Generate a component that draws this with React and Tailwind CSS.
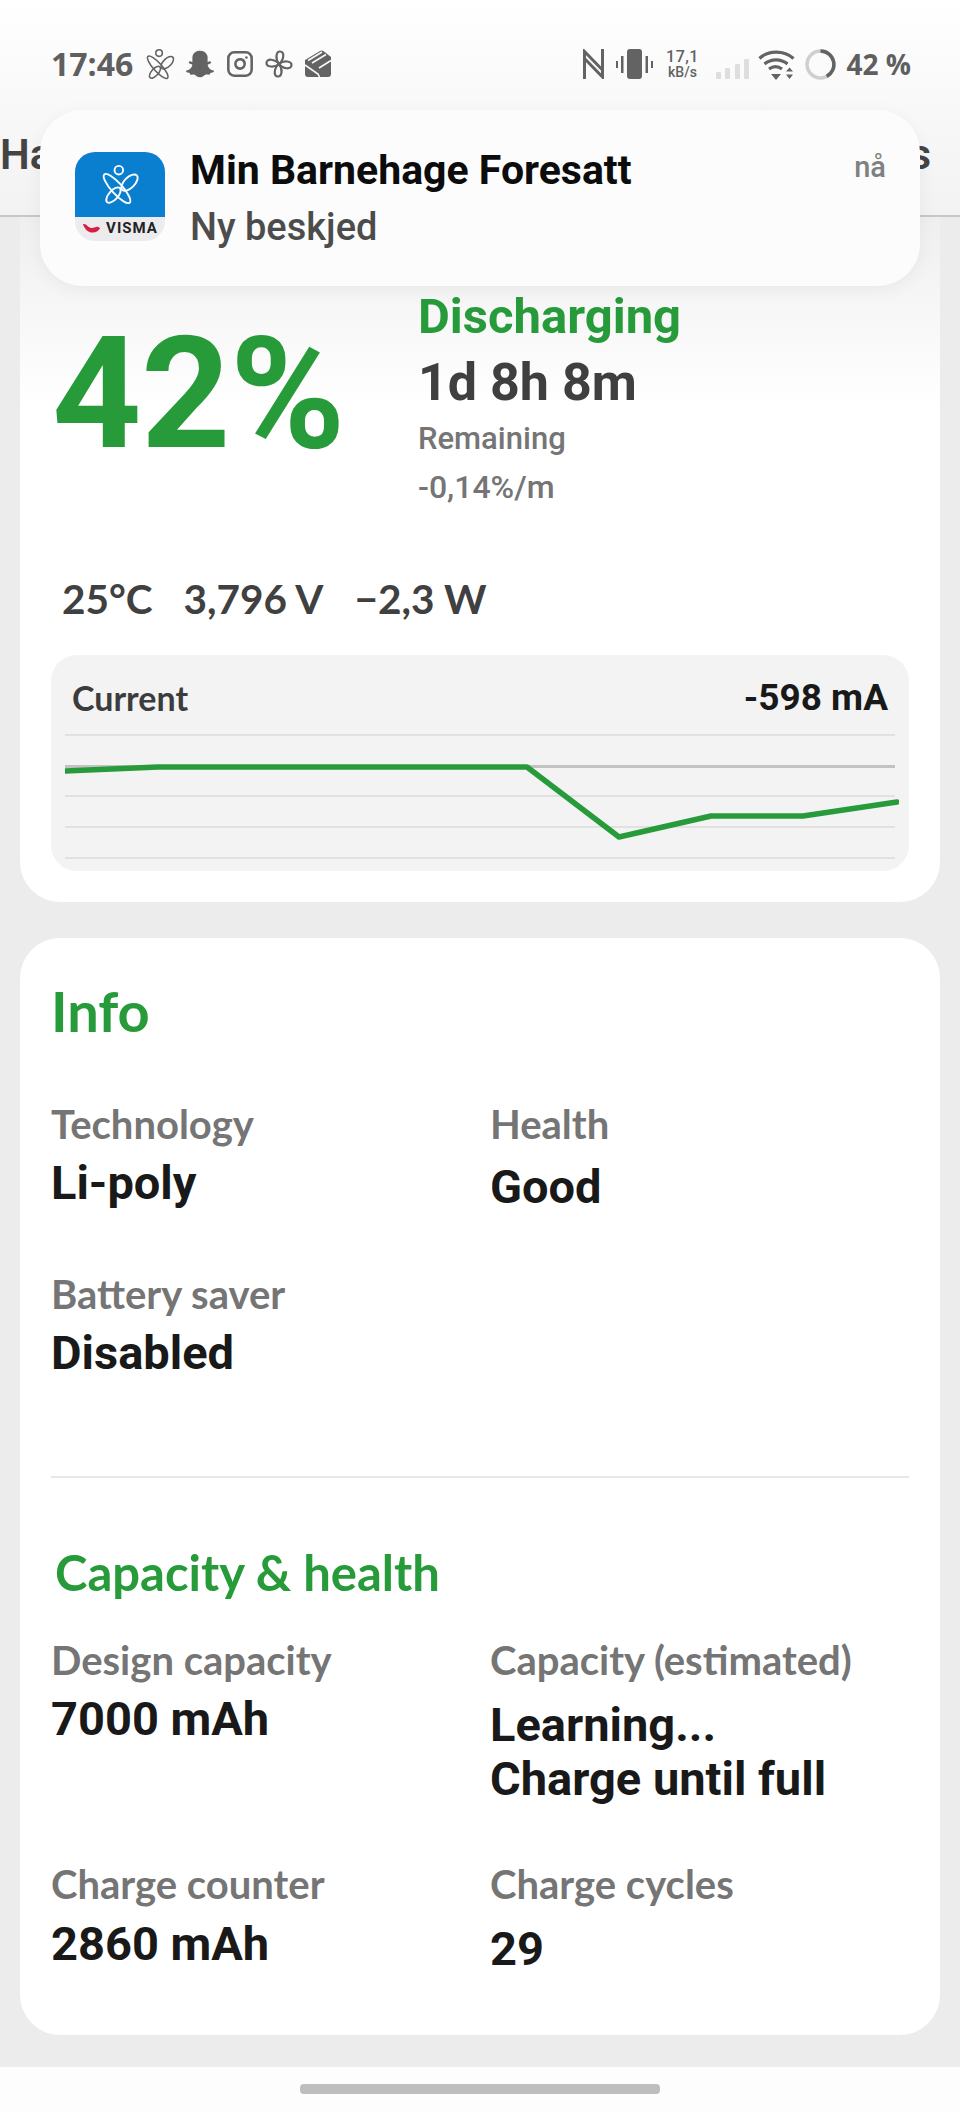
import { Instagram } from "lucide-react";
import { FaSnapchatGhost } from "react-icons/fa";

const roboto = "font-['Roboto',sans-serif]";
const lato = "font-['Lato',sans-serif]";

function PersonMark({ className, color, strokeWidth = 1.7 }) {
  return (
    <svg viewBox="0 0 32 34" className={className} fill="none" stroke={color} strokeWidth={strokeWidth}>
      <circle cx="15" cy="4.5" r="3.6" />
      <ellipse cx="13.5" cy="20" rx="4.6" ry="16" transform="rotate(-42 13.5 20)" />
      <ellipse cx="24" cy="15" rx="4.4" ry="8.6" transform="rotate(45 24 15)" />
      <ellipse cx="10.5" cy="25.5" rx="3.8" ry="8" transform="rotate(42 10.5 25.5)" />
    </svg>
  );
}

function Pinwheel({ className }) {
  return (
    <svg viewBox="0 0 28 28" className={className} fill="none" stroke="#636363" strokeWidth="2.2" strokeLinejoin="round">
      <path d="M14 14 C10 9 11 1.5 15 1.5 C20 1.5 19 10 14 14 Z" />
      <path d="M14 14 C19 10 26.5 11 26.5 15 C26.5 20 18 19 14 14 Z" />
      <path d="M14 14 C18 19 17 26.5 13 26.5 C8 26.5 9 18 14 14 Z" />
      <path d="M14 14 C9 18 1.5 17 1.5 13 C1.5 8 10 9 14 14 Z" />
    </svg>
  );
}

function StackIcon({ className }) {
  return (
    <svg viewBox="0 0 28 28" className={className}>
      <path d="M1 10 L16 1 Q18 0 20 1.5 L27 7 V24 Q27 27 24 27 H4 Q1 27 1 24 Z" fill="#636363" />
      <path d="M4 10.5 L18 2 M8 13 L22 4.5 M1 15 L14 24 L15.5 27 M15 18 L27 10.5" fill="none" stroke="#f8f8f8" strokeWidth="1.6" />
    </svg>
  );
}

function NfcIcon({ className }) {
  return (
    <svg viewBox="0 0 21 30" className={className} fill="none" stroke="#636363" strokeWidth="3">
      <path d="M1.5 30 V2.5 L19.5 21" />
      <path d="M19.5 0 V28 L1.5 9.5" />
    </svg>
  );
}

function VibrateIcon({ className }) {
  return (
    <svg viewBox="0 0 37 30" className={className} fill="#636363">
      <rect x="11" y="0" width="15" height="30" rx="3" />
      <rect x="0" y="12" width="2" height="7" />
      <rect x="5" y="7" width="2.5" height="17" />
      <rect x="29.5" y="7" width="2.5" height="17" />
      <rect x="35" y="12" width="2" height="7" />
    </svg>
  );
}

function SignalIcon({ className }) {
  return (
    <svg viewBox="0 0 33 20" className={className} fill="#dedede">
      <rect x="0" y="13" width="5" height="7" rx="1" />
      <rect x="9" y="9" width="5" height="11" rx="1" />
      <rect x="19" y="5" width="5" height="15" rx="1" />
      <rect x="28" y="0" width="5" height="20" rx="1" />
    </svg>
  );
}

function WifiIcon({ className }) {
  return (
    <svg viewBox="0 0 37 31" className={className} fill="none" stroke="#636363" strokeWidth="3.2">
      <path d="M1.5 9.5 C10 1 26 1 35.5 9.5" />
      <path d="M6.5 15 C13 9.5 23 9.5 29.5 15" />
      <path d="M11 20 C15 17 20 17 24 20" />
      <path d="M13 25 H23 L18 31 Z" fill="#636363" stroke="none" />
      <path d="M28 22.5 L31.5 18.5 L35 22.5 Z M28 25.5 H35 L31.5 30 Z" fill="#636363" stroke="none" />
    </svg>
  );
}

function BatteryRing({ className }) {
  return (
    <svg viewBox="0 0 30 30" className={className} fill="none" strokeWidth="3.4">
      <circle cx="15" cy="15" r="13" stroke="#cfcfcf" />
      <path d="M15 2 A13 13 0 0 1 21 26.5" stroke="#636363" />
    </svg>
  );
}

function StatusBar() {
  return (
    <div className="flex items-center justify-between pl-[51px] pr-[49px] pt-[46px] h-[82px]">
      <div className="flex items-center">
        <span className="font-['Open_Sans',sans-serif] font-bold text-[32px] leading-none text-[#5f5f5f]">17:46</span>
        <PersonMark className="w-[30px] h-[31px] ml-[12px]" color="#636363" />
        <FaSnapchatGhost className="w-[28px] h-[28px] ml-[11px] text-[#636363]" />
        <Instagram className="w-[28px] h-[28px] ml-[12px] text-[#636363]" strokeWidth={2.2} />
        <Pinwheel className="w-[28px] h-[28px] ml-[11px]" />
        <StackIcon className="w-[28px] h-[28px] ml-[11px]" />
      </div>
      <div className="flex items-center">
        <NfcIcon className="w-[21px] h-[30px]" />
        <VibrateIcon className="w-[37px] h-[30px] ml-[12px]" />
        <div className={`${roboto} w-[34px] ml-[12px] flex flex-col items-center font-medium text-[#636363]`}>
          <span className="text-[16px] leading-[17px] tracking-[0.5px]">17,1</span>
          <span className="text-[14px] leading-[15px]">kB/s</span>
        </div>
        <SignalIcon className="w-[33px] h-[20px] ml-[17px] mt-[10px]" />
        <WifiIcon className="w-[37px] h-[31px] ml-[9px]" />
        <BatteryRing className="w-[31px] h-[31px] ml-[10px]" />
        <span className="font-['Open_Sans',sans-serif] font-bold text-[28px] leading-none ml-[10px] text-[#5f5f5f]">42 %</span>
      </div>
    </div>
  );
}

function Notification() {
  return (
    <div className="absolute left-[40px] top-[110px] w-[880px] h-[176px] rounded-[42px] bg-[#fbfcfb] shadow-[0_4px_18px_rgba(0,0,0,0.05)] flex">
      <div className="ml-[35px] mt-[42px] w-[90px] h-[89px] rounded-[20px] overflow-hidden flex flex-col">
        <div className="h-[65px] bg-[#0a7fd0] flex items-center justify-center">
          <PersonMark className="w-[38px] h-[48px]" color="#ffffff" strokeWidth={1.6} />
        </div>
        <div className="h-[24px] bg-[#ececee] flex items-center justify-center pb-[1px]">
          <svg viewBox="0 0 20 12" className="w-[19px] h-[12px] mr-[5px]">
            <path d="M1 1 C5 0 6 5 10 5 C14 5 15 2 19 5 C17 11 5 13 1 1 Z" fill="#d81e46" />
          </svg>
          <span className={`${roboto} font-bold text-[15px] leading-none tracking-[1px] text-[#222]`}>VISMA</span>
        </div>
      </div>
      <div className="ml-[25px] mt-[37px] flex flex-col">
        <span className={`${roboto} font-bold text-[41px] leading-[46px] text-[#0c0c0c]`}>Min Barnehage Foresatt</span>
        <span className={`${roboto} font-medium text-[38px] leading-[42px] mt-[13px] text-[#4c4c4c]`}>Ny beskjed</span>
      </div>
      <span className={`${roboto} font-medium absolute right-[34px] top-[43px] text-[29px] leading-none text-[#808080]`}>nå</span>
    </div>
  );
}

function Stat({ children }) {
  return <span className={`${lato} font-bold text-[40.5px] leading-none text-[#404040]`}>{children}</span>;
}

const currentLine = "0,37 93,33 462,33 554,103 646,82 738,82 832,68";

function CurrentChart() {
  return (
    <div className="mx-[31px] mt-[32px] h-[216px] rounded-[26px] bg-[#f3f3f3] flex flex-col">
      <div className="flex items-center justify-between px-[21px] pt-[6px] h-[79px]">
        <span className={`${lato} font-bold text-[34px] leading-none text-[#3c3c3c]`}>Current</span>
        <span className={`${roboto} font-bold text-[37px] leading-none text-[#191919]`}>-598 mA</span>
      </div>
      <svg viewBox="0 0 834 130" className="w-[834px] h-[130px] ml-[14px]" fill="none">
        <path d="M0 1 H830 M0 62 H830 M0 93 H830 M0 124 H830" stroke="#dcdcdc" strokeWidth="1.5" />
        <path d="M0 32.5 H830" stroke="#c2c2c2" strokeWidth="3" />
        <polyline points={currentLine} stroke="#279b3a" strokeWidth="5.5" strokeLinecap="round" strokeLinejoin="round" />
      </svg>
    </div>
  );
}

function BatteryCard() {
  return (
    <section className="h-[685px] rounded-b-[40px] bg-gradient-to-b from-[#efefef] to-[#ffffff] to-[28%] flex flex-col">
      <div className="flex h-[293px]">
        <span className={`${roboto} font-bold ml-[32px] mt-[99px] text-[156px] leading-[156px] tracking-[-0.5px] text-[#279b3a] w-[366px]`}>42%</span>
        <div className="mt-[72px] flex flex-col">
          <span className={`${roboto} font-bold text-[49px] leading-[56px] text-[#279b3a]`}>Discharging</span>
          <span className={`${roboto} font-bold text-[52px] leading-[60px] mt-[8px] text-[#3f3f3f]`}>1d 8h 8m</span>
          <span className={`${roboto} font-medium text-[31px] leading-[36px] mt-[8px] text-[#757575]`}>Remaining</span>
          <span className={`${roboto} font-medium text-[32px] leading-[36px] mt-[12px] text-[#757575]`}>-0,14%/m</span>
        </div>
      </div>
      <div className="flex items-center gap-[31px] ml-[42px] mt-[65px] h-[48px]">
        <Stat>25°C</Stat>
        <Stat>3,796 V</Stat>
        <Stat>−2,3 W</Stat>
      </div>
      <CurrentChart />
    </section>
  );
}

function Field({ label, value, className }) {
  return (
    <div className={`flex flex-col ${className}`}>
      <span className={`${lato} font-bold text-[40px] leading-[48px] text-[#757575]`}>{label}</span>
      {value}
    </div>
  );
}

function Value({ children, className }) {
  return <span className={`${roboto} font-bold text-[47px] leading-[54px] text-[#191919] ${className}`}>{children}</span>;
}

function InfoCard() {
  return (
    <section className="mt-[36px] h-[1097px] rounded-[40px] bg-white flex flex-col px-[31px]">
      <h2 className={`${lato} font-bold text-[56px] leading-[68px] mt-[39px] text-[#279b3a]`}>Info</h2>
      <div className="grid grid-cols-[439px_1fr] mt-[55px] h-[340px] content-start">
        <Field label="Technology" value={<Value className="mt-[8px]">Li-poly</Value>} className="h-[170px]" />
        <Field label="Health" value={<Value className="mt-[12px]">Good</Value>} className="h-[170px]" />
        <Field label="Battery saver" value={<Value className="mt-[8px]">Disabled</Value>} className="h-[170px]" />
      </div>
      <div className="h-[2px] bg-[#e8e8e8] mt-[36px]" />
      <h2 className={`${lato} font-bold text-[49px] leading-[60px] ml-[4px] mt-[64px] text-[#279b3a]`}>Capacity &amp; health</h2>
      <div className="grid grid-cols-[439px_1fr] mt-[34px]">
        <Field label="Design capacity" value={<Value className="mt-[8px]">7000 mAh</Value>} className="h-[224px]" />
        <Field
          label="Capacity (estimated)"
          value={
            <Value className="mt-[14px]">
              Learning...
              <br />
              Charge until full
            </Value>
          }
          className="h-[224px]"
        />
        <Field label="Charge counter" value={<Value className="mt-[9px]">2860 mAh</Value>} />
        <Field label="Charge cycles" value={<Value className="mt-[14px]">29</Value>} />
      </div>
    </section>
  );
}

export default function App() {
  return (
    <div className="relative w-[960px] h-[2112px] overflow-hidden bg-[#ececec] flex flex-col">
      {/* Top bar, the notification sits over it */}
      <header className="h-[217px] shrink-0 bg-gradient-to-b from-[#ffffff] to-[#f2f2f2] border-b-2 border-[#c9c6c8] flex flex-col">
        <StatusBar />
        <div className={`${roboto} font-semibold flex justify-between text-[42px] leading-none text-[#444] mt-[52px]`}>
          <span>Ha</span>
          <span className="pr-[29px]">s</span>
        </div>
      </header>
      <Notification />

      <main className="px-[20px] shrink-0">
        <BatteryCard />
        <InfoCard />
      </main>

      <footer className="mt-[32px] flex-1 bg-[#fdfdfd] flex justify-center pt-[17px]">
        <div className="w-[360px] h-[10px] rounded-[4px] bg-[#bebebe]" />
      </footer>
    </div>
  );
}
